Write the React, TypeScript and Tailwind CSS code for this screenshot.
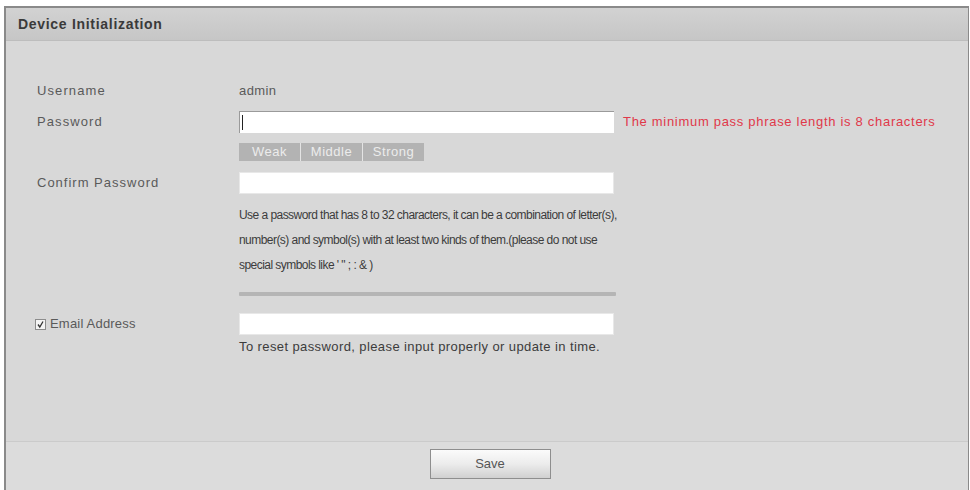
import React from "react";

export default function App() {
  return (
    <div className="w-[970px] h-[490px] bg-white pt-[6px] pl-[4px] overflow-hidden" style={{ fontFamily: '"Liberation Sans", Arial, sans-serif' }}>
      <div className="w-[965px] h-[484px] flex flex-col border-l-2 border-t-2 border-r border-[#8a8a8a] bg-[#d8d8d8]">
        {/* Header */}
        <div className="h-[33px] shrink-0 flex items-center pl-[12px] bg-gradient-to-b from-[#d2d2d2] to-[#c6c6c6] border-b border-[#bdbdbd]">
          <span className="text-[14px] font-bold tracking-[0.7px] text-[#3a3a3a]">Device Initialization</span>
        </div>

        {/* Body */}
        <div className="flex-1 pt-[39px] pl-[31px] text-[13px] tracking-[0.8px] text-[#5a5a5a] whitespace-nowrap">
          {/* Username */}
          <div className="flex h-[22px] items-center">
            <div className="w-[202px] tracking-[1.1px]">Username</div>
            <div className="tracking-[0.4px]">admin</div>
          </div>
          {/* Password */}
          <div className="flex h-[22px] items-center mt-[9px]">
            <div className="w-[202px] tracking-[1.1px]">Password</div>
            <div className="relative w-[375px] h-[22px] bg-white border-t border-l border-[#9a9a9a]">
              <div className="absolute left-[2px] top-[3px] w-px h-[15px] bg-[#222]" />
            </div>
            <div className="ml-[9px] text-[#e0384a] tracking-[0.7px]">The minimum pass phrase length is 8 characters</div>
          </div>
          {/* Strength */}
          <div className="flex mt-[10px]">
            <div className="w-[202px]" />
            <div className="flex h-[18px] bg-[#b3b3b3] text-[#ececec] text-[13px] tracking-[0.5px]">
              <div className="w-[61px] flex items-center justify-center">Weak</div>
              <div className="w-[62px] flex items-center justify-center border-l border-[#e4e4e4]">Middle</div>
              <div className="w-[62px] flex items-center justify-center border-l border-[#e4e4e4]">Strong</div>
            </div>
          </div>
          {/* Confirm */}
          <div className="flex h-[22px] items-center mt-[11px]">
            <div className="w-[202px] tracking-[1px]">Confirm Password</div>
            <div className="w-[375px] h-[22px] bg-white border border-[#e8e8e8]" />
          </div>
          {/* Help */}
          <div className="flex mt-[9px]">
            <div className="w-[202px]" />
            <div className="leading-[25px] text-[12px] tracking-[-0.55px] text-[#3c3c3c]">
              <div>Use a password that has 8 to 32 characters, it can be a combination of letter(s),</div>
              <div>number(s) and symbol(s) with at least two kinds of them.(please do not use</div>
              <div>special symbols like &#39; &quot; ; : &amp; )</div>
            </div>
          </div>
          {/* Gray bar */}
          <div className="flex mt-[14px]">
            <div className="w-[202px]" />
            <div className="w-[377px] h-[4px] bg-[#b5b5b5] rounded-[1px]" />
          </div>
          {/* Email */}
          <div className="flex h-[22px] items-center mt-[17px]">
            <div className="w-[204px] flex items-center -ml-[2px] tracking-[0.2px]">
              <div className="w-[11px] h-[11px] border border-[#8c8c8c] bg-[#f4f4f4] flex items-center justify-center mr-[4px]">
                <svg width="9" height="9" viewBox="0 0 9 9">
                  <path d="M2 4.5 L3.8 7 L7 1.5" stroke="#333" strokeWidth="1.3" fill="none" />
                </svg>
              </div>
              <span>Email Address</span>
            </div>
            <div className="w-[375px] h-[22px] bg-white border border-[#e8e8e8]" />
          </div>
          <div className="flex mt-[4px] leading-[16px]">
            <div className="w-[202px]" />
            <div className="text-[#3c3c3c] tracking-[0.4px]">To reset password, please input properly or update in time.</div>
          </div>
        </div>

        {/* Footer */}
        <div className="h-[49px] shrink-0 flex justify-center pt-[7px] bg-[#dcdcdc] border-t border-[#cbcbcb]">
          <button className="w-[121px] h-[30px] bg-gradient-to-b from-[#fbfbfb] via-[#ececec] to-[#d0d0d0] border border-[#8e8e8e] text-[13px] text-[#555] ml-[6px]">
            Save
          </button>
        </div>
      </div>
    </div>
  );
}
